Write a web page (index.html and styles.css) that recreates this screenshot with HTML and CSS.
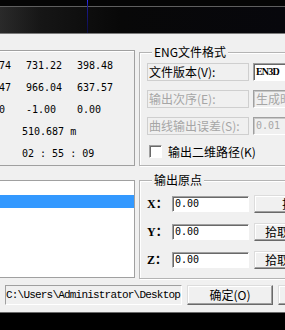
FILE: index.html
```html
<!DOCTYPE html>
<html>
<head>
<meta charset="utf-8">
<link rel="stylesheet" href="styles.css">
</head>
<body>
<div class="screen">
  <div class="topstrip"></div>
  <div class="bar"><span class="cursor"></span></div>
  <div class="dialog">
    <div class="main">
      <div class="leftcol">
        <div class="stats">
          <div class="srow"><span>258.74</span><span>731.22</span><span>398.48</span></div>
          <div class="srow"><span>491.47</span><span>966.04</span><span>637.57</span></div>
          <div class="srow"><span>-1.00</span><span>-1.00</span><span>0.00</span></div>
          <div class="srow single">510.687 m</div>
          <div class="srow single">02 : 55 : 09</div>
        </div>
        <div class="list">
          <div class="item"></div>
          <div class="item sel"></div>
        </div>
      </div>
      <div class="rightcol">
        <fieldset class="group g1">
          <legend>ENG文件格式</legend>
          <div class="gbody">
            <div class="frow"><span class="lbl">文件版本(V):</span><span class="fld serif">EN3D</span></div>
            <div class="frow"><span class="lbl dis">输出次序(E):</span><span class="fld dis">生成时间</span></div>
            <div class="frow"><span class="lbl dis">曲线输出误差(S):</span><span class="fld dis mono">0.01</span></div>
            <div class="chk"><span class="box"></span><span class="chktext">输出二维路径(K)</span></div>
          </div>
        </fieldset>
        <fieldset class="group g2">
          <legend>输出原点</legend>
          <div class="gbody pbody">
            <div class="prow"><span class="axis">X：</span><span class="num">0.00</span><span class="pbtn first">拾取</span></div>
            <div class="prow"><span class="axis">Y：</span><span class="num">0.00</span><span class="pbtn">拾取</span></div>
            <div class="prow"><span class="axis">Z：</span><span class="num">0.00</span><span class="pbtn">拾取</span></div>
          </div>
        </fieldset>
      </div>
    </div>
    <div class="bottomrow">
      <div class="path">C:\Users\Administrator\Desktop</div>
      <div class="bigbtn">确定(O)</div>
      <div class="bigbtn second">取消</div>
    </div>
  </div>
</div>
</body>
</html>
```
FILE: styles.css
```css
body {
  margin: 0;
  background: #000;
  font-family: "Noto Sans CJK SC", sans-serif;
  font-size: 12px;
  color: #000;
}
.screen {
  width: 285px;
  height: 330px;
  overflow: hidden;
  background: #000;
}
.topstrip {
  height: 6px;
  background: #050505;
  border-bottom: 1px solid #5f5f5f;
}
.bar {
  position: relative;
  height: 26px;
  background: linear-gradient(90deg, #2a2a2a 0, #161616 40px, #080808 120px, #07070c 100%);
  border-bottom: 1px solid #7a7a7a;
}
.cursor {
  position: absolute;
  left: 87px;
  top: -7px;
  width: 1px;
  height: 33px;
  background: linear-gradient(#3030ff, #1a1a90 20%, #0c0c40);
}
.dialog {
  height: 278px;
  background: #f0f0f0;
  border-bottom: 1px solid #6a6a6a;
}
.main {
  display: grid;
  grid-template-columns: 135px 200px;
  column-gap: 4px;
}
.leftcol {
  padding-top: 16px;
}
.stats {
  height: 116px;
  box-sizing: border-box;
  border-top: 1px solid #a0a0a0;
  border-right: 1px solid #a0a0a0;
  border-bottom: 1px solid #a0a0a0;
  box-shadow: inset 0 1px 0 #fff;
  padding-top: 4px;
  overflow: hidden;
}
.srow {
  display: grid;
  grid-template-columns: 51px 51px 51px;
  margin-left: -25px;
  height: 22px;
  line-height: 22px;
  font-family: "DejaVu Sans Mono", monospace;
  font-size: 10px;
  white-space: pre;
}
.srow.single {
  display: block;
  margin-left: 22px;
}
.list {
  margin-top: 14px;
  height: 98px;
  box-sizing: border-box;
  border: 1px solid #a0a0a0;
  border-left: none;
  background: #fff;
}
.item {
  height: 14px;
}
.item.sel {
  height: 13px;
  background: #3399ff;
}
.group {
  margin: 0;
  border: 1px solid #b4b4b4;
  box-shadow: inset 1px 1px 0 #fff, 1px 1px 0 #fff;
  min-width: 0;
}
.group legend {
  font-size: 12px;
  line-height: 14px;
  padding: 0 2px;
  margin-left: 5px;
  background: #f0f0f0;
}
.g1 {
  margin-top: 11px;
  padding: 4px 0 7px 7px;
}
.g2 {
  margin-top: 7px;
  padding: 8px 0 9px 7px;
}
.gbody {
  display: flex;
  flex-direction: column;
  gap: 9px;
}
.pbody {
  gap: 10px;
}
.frow {
  display: flex;
  gap: 4px;
  height: 18px;
}
.lbl {
  width: 102px;
  flex: none;
  box-sizing: border-box;
  border: 1px solid #cfcfcf;
  line-height: 16px;
  padding-left: 1px;
  white-space: nowrap;
  overflow: hidden;
}
.dis {
  color: #a6a6a6;
}
.fld {
  width: 70px;
  flex: none;
  box-sizing: border-box;
  border: 1px solid;
  border-color: #a0a0a0 #fff #fff #a0a0a0;
  box-shadow: inset 1px 1px 0 #696969;
  background: #fff;
  line-height: 16px;
  padding-left: 2px;
  white-space: nowrap;
  overflow: hidden;
}
.fld.dis {
  background: #f0f0f0;
  box-shadow: inset 1px 1px 0 #c8c8c8;
}
.serif {
  font-family: "Liberation Serif", serif;
  font-size: 10px;
  font-weight: bold;
  letter-spacing: -0.8px;
}
.mono {
  font-family: "DejaVu Sans Mono", monospace;
  font-size: 10px;
}
.chk {
  display: flex;
  align-items: center;
  height: 13px;
  margin-top: 1px;
}
.box {
  width: 13px;
  height: 13px;
  box-sizing: border-box;
  margin-left: 2px;
  border: 1px solid;
  border-color: #a0a0a0 #fff #fff #a0a0a0;
  box-shadow: inset 1px 1px 0 #696969;
  background: #fff;
}
.chktext {
  margin-left: 6px;
  white-space: nowrap;
  line-height: 13px;
}
.prow {
  display: flex;
  height: 18px;
}
.axis {
  width: 25px;
  flex: none;
  line-height: 18px;
  font-family: "Liberation Serif", "Noto Sans CJK SC", serif;
  font-size: 12px;
  font-weight: bold;
}
.num {
  width: 77px;
  height: 16px;
  margin-top: 1px;
  flex: none;
  box-sizing: border-box;
  border: 1px solid;
  border-color: #a0a0a0 #fff #fff #a0a0a0;
  box-shadow: inset 1px 1px 0 #696969;
  background: #fff;
  font-family: "DejaVu Sans Mono", monospace;
  font-size: 10px;
  line-height: 14px;
  padding-left: 2px;
}
.pbtn {
  margin-left: 5px;
  width: 46px;
  height: 18px;
  flex: none;
  box-sizing: border-box;
  border: 1px solid;
  border-color: #dcdcdc #696969 #696969 #dcdcdc;
  box-shadow: inset -1px -1px 0 #a0a0a0, inset 1px 1px 0 #fff;
  background: #f0f0f0;
  text-align: center;
  line-height: 16px;
  white-space: nowrap;
  overflow: hidden;
}
.pbtn.first {
  width: 60px;
  text-align: left;
  padding-left: 27px;
}
.bottomrow {
  display: flex;
  gap: 5px;
  margin-top: 6px;
  height: 20px;
  padding-left: 5px;
}
.path {
  width: 177px;
  flex: none;
  box-sizing: border-box;
  border: 1px solid;
  border-color: #a0a0a0 #fff #fff #a0a0a0;
  background: #f0f0f0;
  font-family: "Liberation Mono", monospace;
  font-size: 11px;
  letter-spacing: -0.8px;
  line-height: 18px;
  white-space: nowrap;
  overflow: hidden;
}
.bigbtn {
  width: 86px;
  flex: none;
  box-sizing: border-box;
  border: 1px solid;
  border-color: #dcdcdc #696969 #696969 #dcdcdc;
  box-shadow: inset -1px -1px 0 #a0a0a0, inset 1px 1px 0 #fff;
  background: #f0f0f0;
  text-align: center;
  line-height: 18px;
  white-space: nowrap;
}
.bigbtn.second {
  width: 80px;
  text-indent: 40px;
}
```
